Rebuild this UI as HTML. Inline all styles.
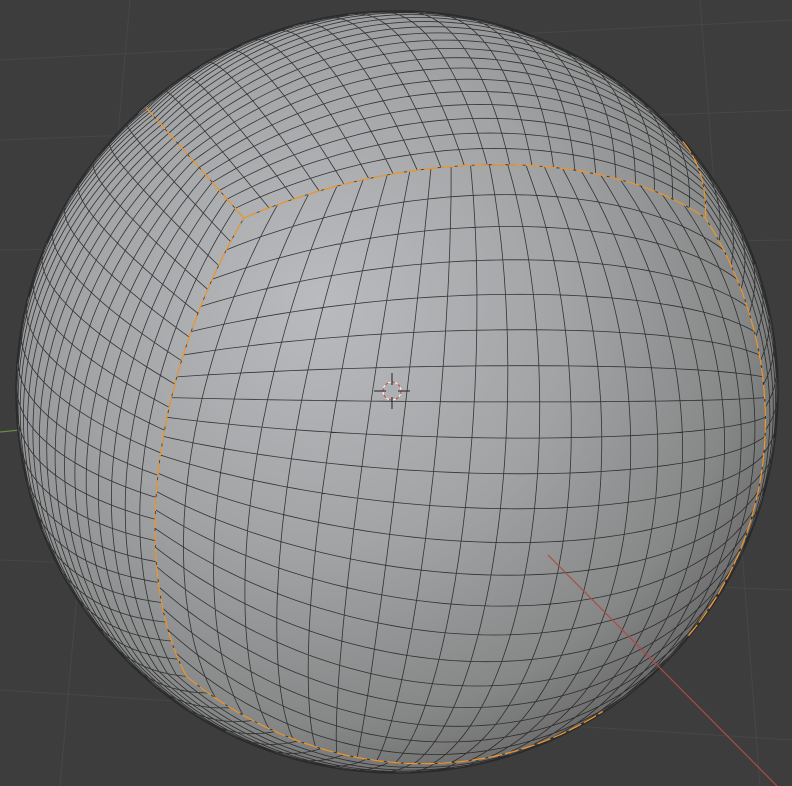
<!DOCTYPE html>
<html><head><meta charset="utf-8"><style>
html,body{margin:0;padding:0;background:#3d3d3d;overflow:hidden}
svg{display:block}
</style></head><body>
<svg id="s" width="792" height="786" viewBox="0 0 792 786" xmlns="http://www.w3.org/2000/svg">
<defs>
<radialGradient id="g" cx="320" cy="300" r="500" gradientUnits="userSpaceOnUse">
<stop offset="0" stop-color="#b9bbbe"/>
<stop offset="0.5" stop-color="#a2a3a5"/>
<stop offset="0.85" stop-color="#868787"/>
<stop offset="1" stop-color="#6c6c6c"/>
</radialGradient>
</defs>
<rect width="792" height="786" fill="#3d3d3d"/>
<g stroke="#474747" stroke-width="1" fill="none">
<path d="M0 60 L792 20 M0 140 L792 110 M0 250 L792 240 M0 560 L792 590 M0 690 L792 740 M130 0 L60 786 M700 0 L760 786"/>
</g>
<line x1="0" y1="432" x2="20" y2="430" stroke="#6a8a3a" stroke-width="1.2"/>
<circle cx="397" cy="392" r="381" fill="url(#g)" stroke="#2a2a2a" stroke-width="1.5"/>
<g id="mesh" fill="none" stroke="#1e1e1e" stroke-width="0.8" stroke-opacity="0.85"></g>
<g id="seam" fill="none" stroke="#f0962a" stroke-width="1.2" stroke-dasharray="14 3"></g>
<line x1="548" y1="555" x2="777" y2="786" stroke="#b04a40" stroke-width="1.2"/>
<g stroke="#222" stroke-width="1" fill="none">
<circle cx="392" cy="391" r="9" stroke="#c44" stroke-dasharray="4 3"/>
<circle cx="392" cy="391" r="9" stroke="#fff" stroke-dasharray="3 4" stroke-dashoffset="4"/>
<path d="M374 391h12M398 391h12M392 373v12M392 397v12"/>
</g>
</svg>
<script>
(function(){
var cx=397,cy=392,R=380,N=21,c=0.64;
var a=0.36,b=0.34;
function rot(v){
 var x=v[0],y=v[1],z=v[2],l=Math.hypot(x,y,z);x/=l;y/=l;z/=l;
 var y1=y*Math.cos(a)-z*Math.sin(a), z1=y*Math.sin(a)+z*Math.cos(a);
 var x2=x*Math.cos(b)+z1*Math.sin(b), z2=-x*Math.sin(b)+z1*Math.cos(b);
 return [cx+x2*R, cy-y1*R, z2];
}
function m(s,d,e){return d*Math.tan(s*Math.atan(e/d));}
function faceP(f,u,v){
 switch(f){
 case 0:return[m(u,c,1),m(v,c,1),c];
 case 1:return[-m(u,c,1),m(v,c,1),-c];
 case 2:return[1,m(v,1,1),-m(u,1,c)];
 case 3:return[-1,m(v,1,1),m(u,1,c)];
 case 4:return[m(u,1,1),1,-m(v,1,c)];
 default:return[m(u,1,1),-1,m(v,1,c)];}
}
var mesh='',seam='';
function line(f,fixedU,t,M){
 var d='',pen=false;
 for(var k=0;k<=M;k++){
  var s=-1+2*k/M; var p=fixedU?faceP(f,t,s):faceP(f,s,t); var q=rot(p);
  if(q[2]>-0.01){d+=(pen?'L':'M')+q[0].toFixed(1)+' '+q[1].toFixed(1);pen=true;}else pen=false;
 }
 return d;
}
for(var f=0;f<6;f++){
 for(var i=0;i<=N;i++){
  var t=-1+2*i/N;
  var d1=line(f,true,t,60),d2=line(f,false,t,60);
  var edge=(i==0||i==N);
  if(edge&&f==0){seam+=d1+d2;}
  else if(edge&&f==4){seam+=d1;mesh+=d2;}
  else mesh+=d1+d2;
 }
}
document.getElementById('mesh').innerHTML='<path d="'+mesh+'"/>';
document.getElementById('seam').innerHTML='<path d="'+seam+'"/>';
})();
</script>
</body></html>
